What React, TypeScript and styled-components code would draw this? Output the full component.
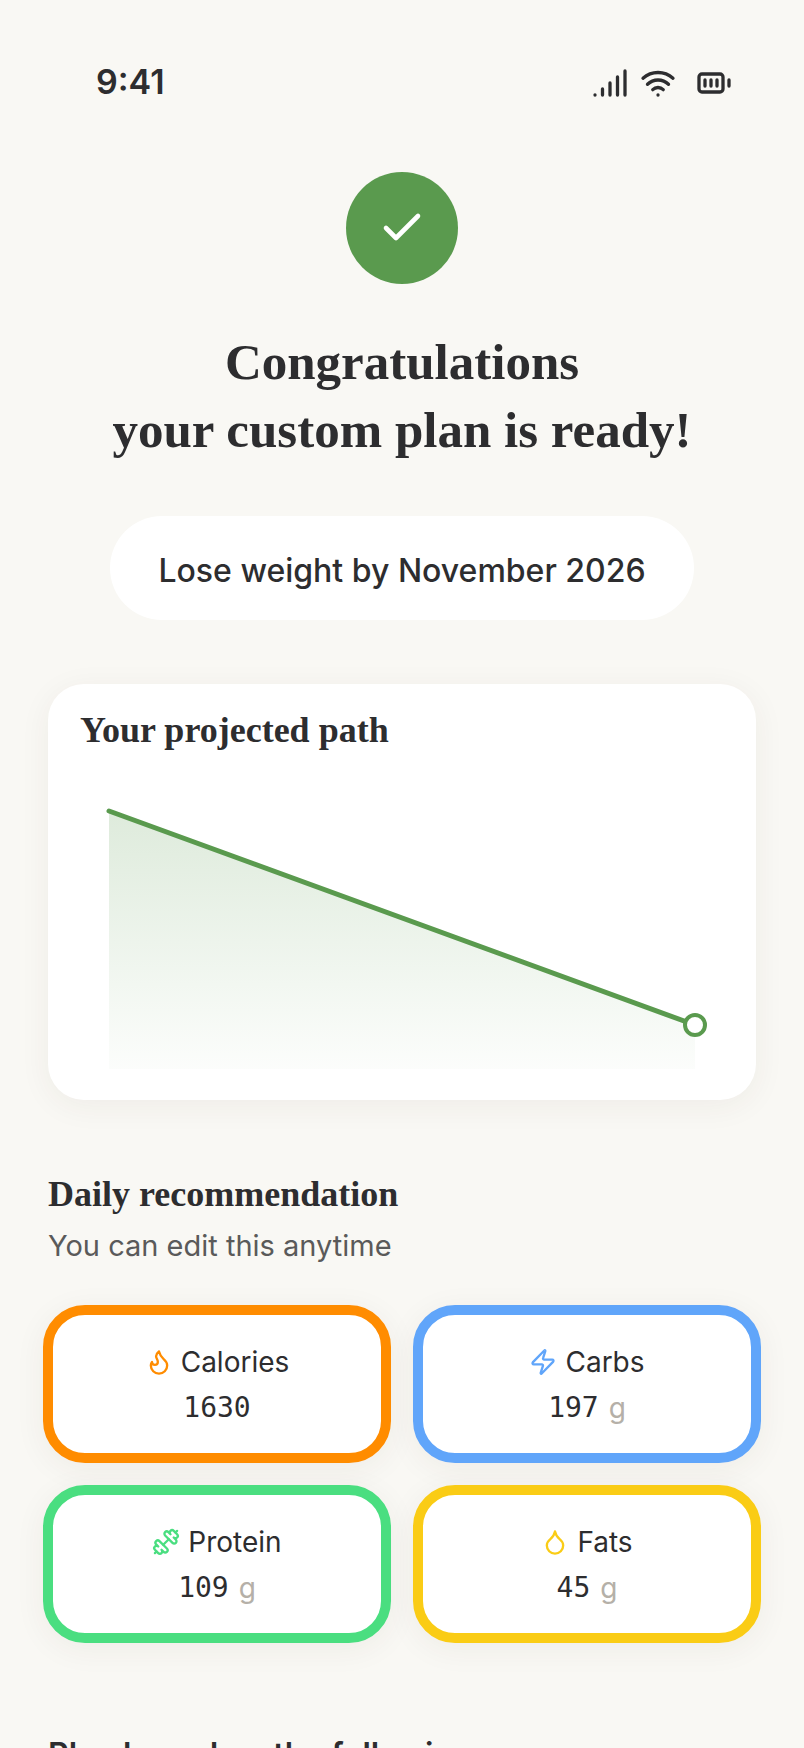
import React from "react";
import styled, { createGlobalStyle } from "styled-components";
import {
  BatteryFull,
  Check,
  Droplet,
  Dumbbell,
  Flame,
  Signal,
  Wifi,
  Zap,
  type LucideIcon,
} from "lucide-react";

const serif = '"Liberation Serif", serif';
const sans = 'Inter, "Liberation Sans", sans-serif';
const mono = '"DejaVu Sans Mono", "Liberation Mono", monospace';

const GlobalStyle = createGlobalStyle`
  * { box-sizing: border-box; }
  body {
    margin: 0;
    background: #f9f8f4;
    color: #2d2d2f;
    font-family: ${sans};
  }
`;

const Screen = styled.div`
  height: 100vh;
  overflow-y: auto;
  scrollbar-width: none;
`;

const StatusBar = styled.header`
  display: flex;
  align-items: center;
  justify-content: space-between;
  padding: 62px 72px 0 96px;
`;

const Time = styled.time`
  font-size: 34px;
  line-height: 40px;
  font-weight: 600;
`;

const StatusIcons = styled.div`
  display: flex;
  align-items: center;
  gap: 12px;
  padding-top: 2px;

  svg:last-child {
    margin-left: 8px;
  }
`;

const Content = styled.main`
  display: flex;
  flex-direction: column;
  padding: 70px 48px 48px;
`;

const Badge = styled.div`
  display: grid;
  place-items: center;
  align-self: center;
  width: 112px;
  height: 112px;
  border-radius: 50%;
  background: #5a9a4e;
  color: #ffffff;
`;

const Title = styled.h1`
  margin: 44px 0 0;
  font-family: ${serif};
  font-size: 51px;
  line-height: 68px;
  font-weight: 700;
  text-align: center;
`;

const Goal = styled.p`
  align-self: center;
  margin: 52px 0 0;
  padding: 35px 48px 29px;
  border-radius: 52px;
  background: #ffffff;
  font-size: 32px;
  line-height: 40px;
  font-weight: 500;
`;

const PathCard = styled.section`
  margin-top: 64px;
  padding: 22px 32px 28px;
  border-radius: 36px;
  background: #ffffff;
  box-shadow: 0 6px 32px rgba(60, 50, 40, 0.06);
`;

const Heading = styled.h2`
  margin: 0;
  font-family: ${serif};
  font-size: 36px;
  line-height: 48px;
  font-weight: 700;
`;

const Chart = styled.svg`
  display: block;
  width: 100%;
  height: auto;
  margin-top: 42px;
`;

const Intro = styled.div`
  margin-top: 70px;
`;

const Hint = styled.p`
  margin: 8px 0 0;
  color: #5a5a5a;
  font-size: 29px;
  line-height: 40px;
`;

const Macros = styled.div`
  display: grid;
  grid-template-columns: 1fr 1fr;
  gap: 22px;
  margin: 39px -5px 0;
`;

const MacroCard = styled.button<{ $color: string }>`
  display: flex;
  flex-direction: column;
  align-items: center;
  gap: 10px;
  padding: 29px 16px 27px;
  border: 10px solid ${(p) => p.$color};
  border-radius: 42px;
  background: #ffffff;
  color: inherit;
  font-family: ${sans};
  font-size: 28px;
  line-height: 36px;
  box-shadow: 0 6px 32px rgba(60, 50, 40, 0.06);
  cursor: pointer;

  svg {
    color: ${(p) => p.$color};
  }
`;

const MacroName = styled.span`
  display: flex;
  align-items: center;
  gap: 8px;
`;

const MacroValue = styled.span`
  display: flex;
  align-items: center;
  gap: 10px;
  height: 36px;
  font-family: ${mono};
`;

const Unit = styled.span`
  color: #b5b0a8;
  font-family: ${sans};
`;

const Sources = styled.h2`
  margin: 92px 0 0;
  font-size: 32px;
  line-height: 40px;
  font-weight: 600;
`;

type Macro = {
  name: string;
  value: number;
  unit?: string;
  color: string;
  Icon: LucideIcon;
};

const macros: Macro[] = [
  { name: "Calories", value: 1630, color: "#ff8c00", Icon: Flame },
  { name: "Carbs", value: 197, unit: "g", color: "#60a5fa", Icon: Zap },
  { name: "Protein", value: 109, unit: "g", color: "#4ade80", Icon: Dumbbell },
  { name: "Fats", value: 45, unit: "g", color: "#facc15", Icon: Droplet },
];

export default function App() {
  return (
    <Screen>
      <GlobalStyle />
      <StatusBar>
        <Time>9:41</Time>
        <StatusIcons>
          <Signal size={36} strokeWidth={2.2} />
          <Wifi size={36} strokeWidth={2.2} />
          <BatteryFull size={36} strokeWidth={2.2} />
        </StatusIcons>
      </StatusBar>
      <Content>
        <Badge>
          <Check size={48} strokeWidth={2.3} />
        </Badge>
        <Title>
          Congratulations
          <br />
          your custom plan is ready!
        </Title>
        <Goal>Lose weight by November 2026</Goal>

        <PathCard>
          <Heading>Your projected path</Heading>
          <Chart viewBox="0 0 644 276" role="img" aria-label="Projected weight going down">
            <defs>
              <linearGradient id="pathFill" x1="0" y1="0" x2="0" y2="1">
                <stop offset="0" stopColor="#5a9a4e" stopOpacity="0.2" />
                <stop offset="1" stopColor="#5a9a4e" stopOpacity="0.02" />
              </linearGradient>
            </defs>
            <path d="M29 15L615 229V273H29Z" fill="url(#pathFill)" />
            <path d="M29 15L615 229" stroke="#5a9a4e" strokeWidth="5" strokeLinecap="round" />
            <circle cx="615" cy="229" r="10" fill="#ffffff" stroke="#5a9a4e" strokeWidth="4" />
          </Chart>
        </PathCard>

        <Intro>
          <Heading>Daily recommendation</Heading>
          <Hint>You can edit this anytime</Hint>
        </Intro>

        <Macros>
          {macros.map(({ name, value, unit, color, Icon }) => (
            <MacroCard key={name} type="button" $color={color}>
              <MacroName>
                <Icon size={28} />
                {name}
              </MacroName>
              <MacroValue>
                {value}
                {unit && <Unit>{unit}</Unit>}
              </MacroValue>
            </MacroCard>
          ))}
        </Macros>

        <Sources>Plan based on the following</Sources>
      </Content>
    </Screen>
  );
}
